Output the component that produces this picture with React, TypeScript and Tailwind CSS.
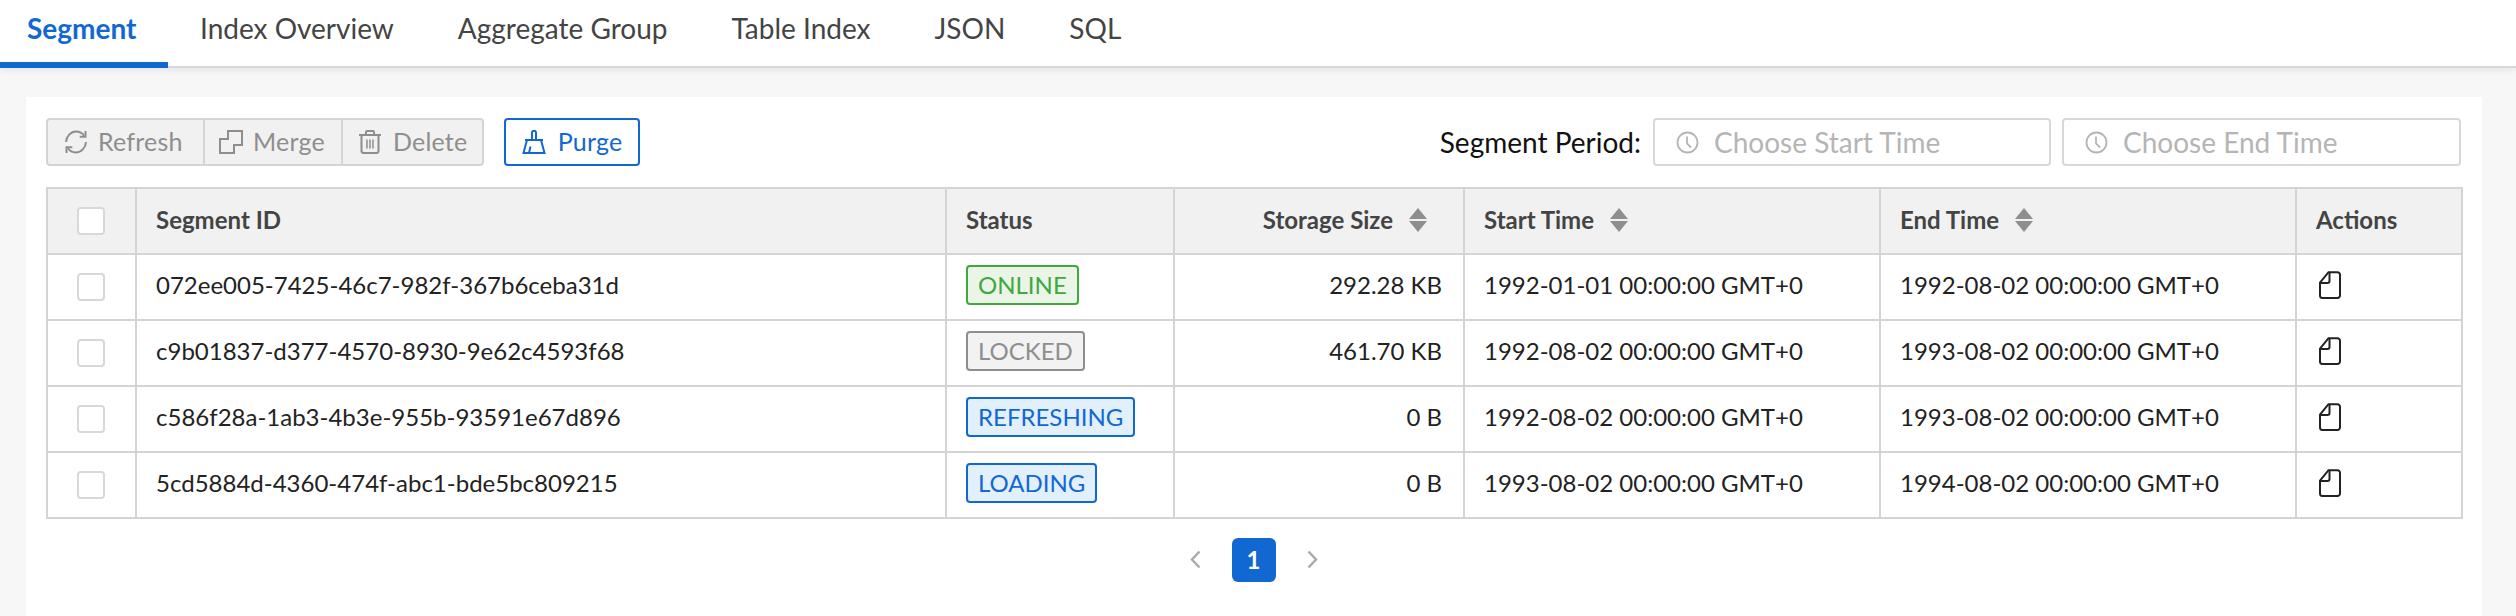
import React from "react";

const tabs = ["Segment", "Index Overview", "Aggregate Group", "Table Index", "JSON", "SQL"];

const rows = [
  { id: "072ee005-7425-46c7-982f-367b6ceba31d", status: "ONLINE", size: "292.28 KB", start: "1992-01-01 00:00:00 GMT+0", end: "1992-08-02 00:00:00 GMT+0" },
  { id: "c9b01837-d377-4570-8930-9e62c4593f68", status: "LOCKED", size: "461.70 KB", start: "1992-08-02 00:00:00 GMT+0", end: "1993-08-02 00:00:00 GMT+0" },
  { id: "c586f28a-1ab3-4b3e-955b-93591e67d896", status: "REFRESHING", size: "0 B", start: "1992-08-02 00:00:00 GMT+0", end: "1993-08-02 00:00:00 GMT+0" },
  { id: "5cd5884d-4360-474f-abc1-bde5bc809215", status: "LOADING", size: "0 B", start: "1993-08-02 00:00:00 GMT+0", end: "1994-08-02 00:00:00 GMT+0" },
];

function RefreshIcon() {
  return (
    <svg width="24" height="24" viewBox="0 0 24 24" fill="none" stroke="currentColor" strokeWidth="2">
      <path d="M2 12C2.300 6.200 6.800 1.500 12.200 1.500c3.300 0 6.100 1.600 7.900 4.200" />
      <path d="M21.500 1v5.800h-5.800" />
      <path d="M22 12c-.3 5.800-4.800 10.500-10.200 10.500-3.300 0-6.100-1.600-7.900-4.200" />
      <path d="M2.500 23v-5.800h5.800" />
    </svg>
  );
}
function MergeIcon() {
  return (
    <svg width="24" height="24" viewBox="0 0 24 24" fill="none" stroke="currentColor" strokeWidth="2">
      <path d="M9 1h14v14h-8v8H1V9h8z" />
    </svg>
  );
}
function TrashIcon() {
  return (
    <svg width="24" height="24" viewBox="0 0 24 24" fill="none" stroke="currentColor" strokeWidth="2">
      <path d="M1 5h22" />
      <path d="M8 5V2a1 1 0 0 1 1-1h6a1 1 0 0 1 1 1v3" />
      <path d="M3.500 5v16a2 2 0 0 0 2 2h13a2 2 0 0 0 2-2V5" />
      <path d="M9 9.500v9M12 9.500v9M15 9.500v9" strokeWidth="1.500" />
    </svg>
  );
}
function BroomIcon() {
  return (
    <svg width="24" height="24" viewBox="0 0 24 24" fill="none" stroke="currentColor" strokeWidth="2">
      <path d="M10 9.500V2.800a2 2 0 0 1 4 0v6.700" />
      <path d="M3 10h18" />
      <path d="M5 10 1.500 23h21L19 10" />
      <path d="M8.500 16.500 7 23" />
    </svg>
  );
}
function ClockIcon() {
  return (
    <svg width="23" height="23" viewBox="0 0 23 23" fill="none" stroke="#b5b5b5" strokeWidth="1.800" className="shrink-0">
      <circle cx="11.500" cy="11.500" r="10" />
      <path d="M11 5.500v7l4 4" />
    </svg>
  );
}
function FileIcon() {
  return (
    <svg width="22" height="28" viewBox="0 0 22 28" fill="none" stroke="#222222" strokeWidth="2" className="ml-[3px]">
      <path d="M9.500 1.200h9a2.500 2.500 0 0 1 2.500 2.500v20.800a2.500 2.500 0 0 1-2.500 2.500h-15a2.500 2.500 0 0 1-2.500-2.500V11.500z" />
      <path d="M10.500 2v8a2 2 0 0 1-2 2H2" />
    </svg>
  );
}
function SortCaret() {
  return (
    <svg width="20" height="24" viewBox="0 0 20 24" fill="#8e8e8e" className="ml-[15px] shrink-0">
      <path d="M10 0l9 11H1z" />
      <path d="M10 24l9-11H1z" />
    </svg>
  );
}
function Checkbox() {
  return <span className="block h-[28px] w-[28px] mx-auto rounded-[4px] border-2 border-[#d8d8d8] bg-white" />;
}

const badge: Record<string, string> = {
  ONLINE: "border-[#3fa83f] bg-[#eaf5e8] text-[#3fa83f]",
  LOCKED: "border-[#8e8e8e] bg-[#f2f2f2] text-[#8e8e8e]",
  REFRESHING: "border-[#1268d3] bg-[#e2f0fb] text-[#1268d3]",
  LOADING: "border-[#1268d3] bg-[#e2f0fb] text-[#1268d3]",
};

function ToolButton({ icon, label, className }: { icon: React.ReactNode; label: string; className: string }) {
  return (
    <div className={`flex h-full items-center ${className}`}>
      {icon}
      <span>{label}</span>
    </div>
  );
}

const th = "border-2 border-[#d4d4d4] bg-[#f1f1f1] px-[19px] pb-[2px] text-left font-bold text-[#444444]";
const td = "border-2 border-[#d4d4d4] px-[19px] pb-[4px] text-[#222222]";

export default function App() {
  return (
    <div className="min-h-[616px] bg-[#f7f7f7] font-['Lato',sans-serif] text-[24px]">
      <div className="flex h-[68px] border-b-2 border-[#d8d8d8] bg-white shadow-[0_2px_8px_rgba(0,0,0,0.08)]">
        {tabs.map((t, i) => (
          <div
            key={t}
            className={
              i === 0
                ? "h-[68px] w-[168px] border-b-[6px] border-[#1268d3] pl-[27px] pt-[7px] text-[28px] font-bold text-[#1268d3]"
                : "px-[32px] pt-[7px] text-[28px] text-[#444444]"
            }
          >
            {t}
          </div>
        ))}
      </div>
      <div className="ml-[26px] mr-[34px] mt-[29px] h-[519px] bg-white pl-[20px] pr-[21px] pt-[21px]">
        <div className="flex h-[48px] items-center">
          <div className="flex h-full w-[438px] rounded-[4px] border-2 border-[#d4d4d4] bg-[#f1f1f1] text-[25px] tracking-[0.2px] text-[#8e8e8e]">
            <ToolButton icon={<RefreshIcon />} label="Refresh" className="w-[157px] gap-[10px] border-r-2 border-[#d4d4d4] pl-[16px]" />
            <ToolButton icon={<MergeIcon />} label="Merge" className="w-[138px] gap-[10px] border-r-2 border-[#d4d4d4] pl-[14px]" />
            <ToolButton icon={<TrashIcon />} label="Delete" className="flex-1 gap-[11px] pl-[15px]" />
          </div>
          <div className="ml-[20px] flex h-full w-[136px] items-center justify-center gap-[12px] rounded-[4px] border-2 border-[#1268d3] text-[25px] tracking-[0.2px] text-[#1268d3]">
            <BroomIcon />
            <span>Purge</span>
          </div>
          <div className="ml-auto mr-[12px] text-[28px] text-[#111111]">Segment Period:</div>
          <div className="flex h-full w-[398px] items-center gap-[15px] rounded-[4px] border-2 border-[#d8d8d8] pl-[21px] text-[28px] text-[#b5b5b5]">
            <ClockIcon />
            <span>Choose Start Time</span>
          </div>
          <div className="ml-[11px] flex h-full w-[399px] items-center gap-[15px] rounded-[4px] border-2 border-[#d8d8d8] pl-[21px] text-[28px] text-[#b5b5b5]">
            <ClockIcon />
            <span>Choose End Time</span>
          </div>
        </div>
        <table className="mt-[21px] w-[2415px] table-fixed border-collapse">
          <colgroup>
            <col className="w-[89px]" />
            <col className="w-[810px]" />
            <col className="w-[228px]" />
            <col className="w-[290px]" />
            <col className="w-[416px]" />
            <col className="w-[416px]" />
            <col className="w-[166px]" />
          </colgroup>
          <thead>
            <tr className="h-[66px]">
              <th className={`${th} !pl-0 !pr-[2px] !pb-0`}><Checkbox /></th>
              <th className={th}>Segment ID</th>
              <th className={th}>Status</th>
              <th className={th}>
                <div className="mr-[16px] flex items-center justify-end">Storage Size<SortCaret /></div>
              </th>
              <th className={th}>
                <div className="flex items-center">Start Time<SortCaret /></div>
              </th>
              <th className={th}>
                <div className="flex items-center">End Time<SortCaret /></div>
              </th>
              <th className={th}>Actions</th>
            </tr>
          </thead>
          <tbody>
            {rows.map((r) => (
              <tr key={r.id} className="h-[66px]">
                <td className={`${td} !pl-0 !pr-[2px] !pb-0`}><Checkbox /></td>
                <td className={td}>{r.id}</td>
                <td className={td}>
                  <span className={`inline-flex h-[40px] items-center rounded-[4px] border-2 px-[10px] ${badge[r.status]}`}>
                    {r.status}
                  </span>
                </td>
                <td className={`${td} !pr-[21px] text-right`}>{r.size}</td>
                <td className={td}>{r.start}</td>
                <td className={td}>{r.end}</td>
                <td className={td}><FileIcon /></td>
              </tr>
            ))}
          </tbody>
        </table>
        <div className="mt-[19px] flex items-center justify-center gap-[31px]">
          <svg width="11" height="19" viewBox="0 0 11 19" fill="none" stroke="#ababab" strokeWidth="2.500" className="-mt-[2px]"><path d="M9.500 1.500 2 9.500l7.500 8" /></svg>
          <div className="flex h-[44px] w-[44px] items-center justify-center rounded-[6px] bg-[#1268d3] font-bold text-white">1</div>
          <svg width="11" height="19" viewBox="0 0 11 19" fill="none" stroke="#ababab" strokeWidth="2.500" className="-mt-[2px]"><path d="M1.500 1.500 9 9.500l-7.500 8" /></svg>
        </div>
      </div>
    </div>
  );
}
